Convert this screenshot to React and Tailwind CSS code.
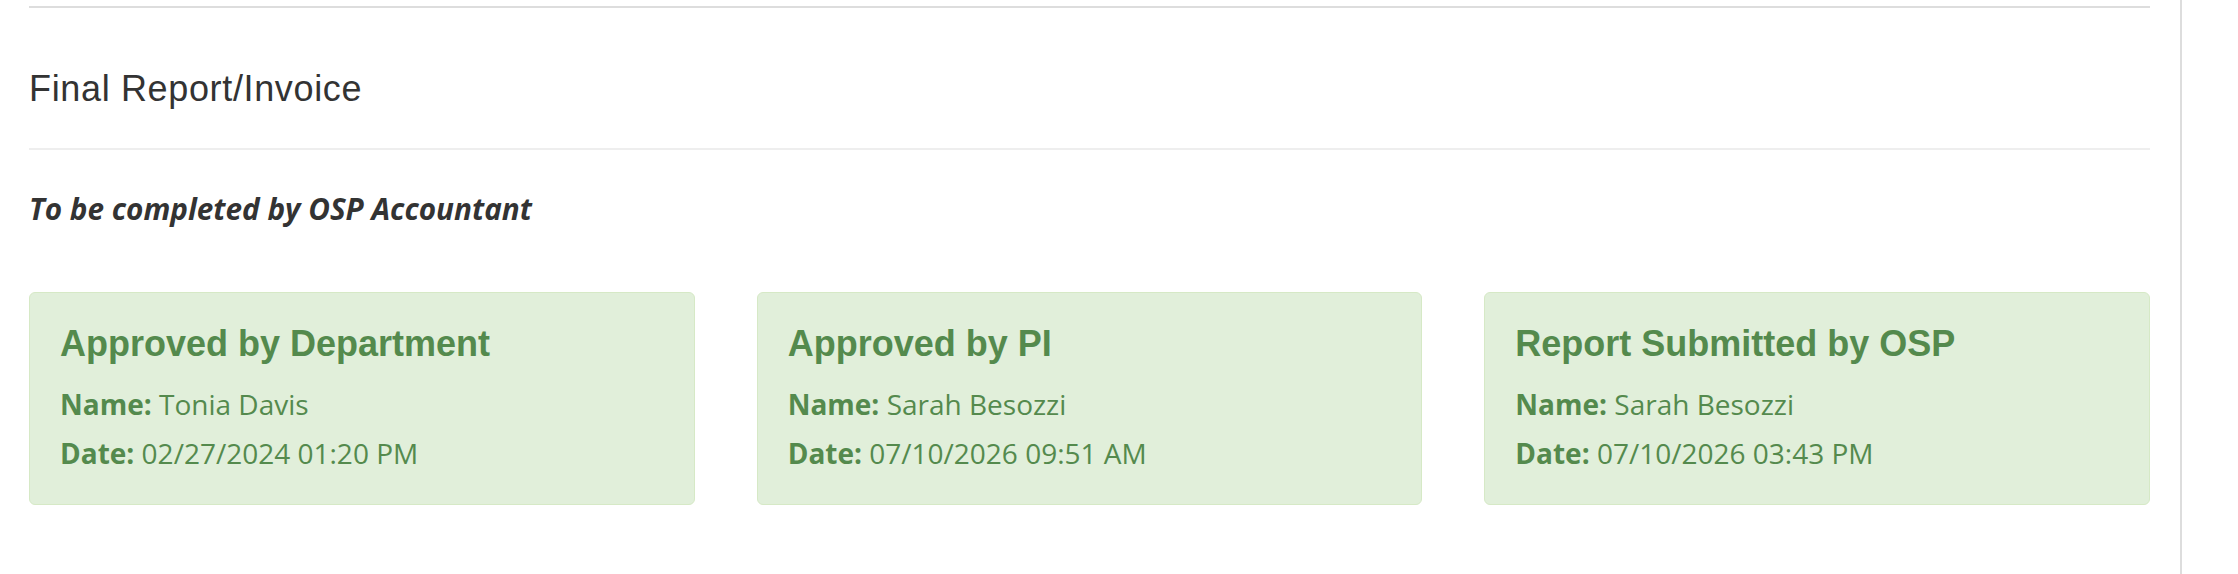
import React from "react";

const approvals = [
  { title: "Approved by Department", name: "Tonia Davis", date: "02/27/2024 01:20 PM" },
  { title: "Approved by PI", name: "Sarah Besozzi", date: "07/10/2026 09:51 AM" },
  { title: "Report Submitted by OSP", name: "Sarah Besozzi", date: "07/10/2026 03:43 PM" },
];

const ApprovalCard = ({ title, name, date }) => (
  <div className="rounded-[6px] border-[1.5px] border-[#d6e9c6] bg-[#e1efda] pl-[30px] pr-[30px] pt-[31px] pb-[26px] text-[#548a4d]">
    <h3 className="font-['Liberation_Sans',Arial,sans-serif] text-[36px] font-bold leading-[1.1]">
      {title}
    </h3>
    <div className="mt-[16px] font-['Open_Sans',sans-serif] text-[28px] leading-[49px]">
      <p>
        <span className="font-bold">Name:</span> {name}
      </p>
      <p>
        <span className="font-bold">Date:</span> {date}
      </p>
    </div>
  </div>
);

const App = () => {
  return (
    <div className="flex h-[574px] w-full bg-white">
      {/* Main column */}
      <div className="w-[2180px] shrink-0 pl-[29px] pr-[30px]">
        <div className="mt-[6px] h-[2px] bg-[#dddddd]" />

        <h2 className="mt-[61px] font-['Liberation_Sans',Arial,sans-serif] text-[36px] leading-[1.1] text-[#333333] tracking-[0.65px]">
          Final Report/Invoice
        </h2>

        <div className="mt-[39px] h-[2px] bg-[#eeeeee]" />

        <p className="mt-[43px] font-['Open_Sans',sans-serif] text-[29.7px] font-bold italic leading-[1.1] text-[#333333]">
          To be completed by OSP Accountant
        </p>

        {/* Approval cards */}
        <div className="mt-[67px] grid grid-cols-3 gap-[62px]">
          {approvals.map((a) => (
            <ApprovalCard key={a.title} {...a} />
          ))}
        </div>
      </div>

      {/* Right edge */}
      <div className="flex-1 border-l-2 border-[#dddddd]" />
    </div>
  );
};

export default App;
